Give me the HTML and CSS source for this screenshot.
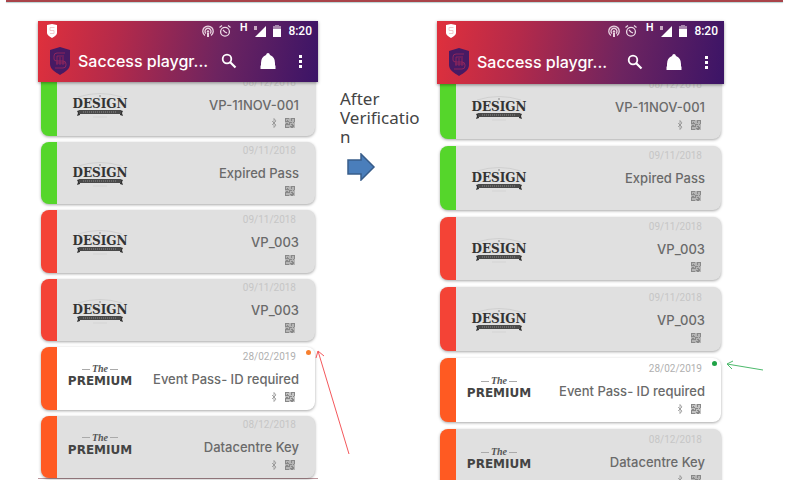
FILE: index.html
```html
<!DOCTYPE html>
<html lang="en">
<head>
  <meta charset="UTF-8" />
  <meta name="viewport" content="width=device-width, initial-scale=1" />
  <title>Pass verification</title>
  <link rel="stylesheet" href="styles.css">
</head>
<body>

  <!-- Shared icons -->
  <svg width="0" height="0" class="defs" aria-hidden="true">
    <symbol id="shield" viewBox="0 0 20 28">
      <path d="M10 0 20 3v14c0 5-5 8-10 11C5 25 0 22 0 17V3z" fill="#471a63" />
      <path d="M15 6H7Q4 6 4 9v3q0 2 3 2h6q3 0 3 3v1q0 3-3 3H5M7 9h7M7 9v9M10 10v8M13 10v8M6 16h9" fill="none" stroke="#a02a5c" stroke-width=".8" />
    </symbol>
    <symbol id="badge" viewBox="0 0 10 14">
      <path d="M5 0 10 1v8c0 2-2 3-5 5C2 12 0 11 0 9V1z" fill="#fff" />
      <path d="M7.500 3.500H3v3h4v3H3" fill="none" stroke="#f0bcc0" stroke-width=".8" />
    </symbol>
    <symbol id="hotspot" viewBox="0 0 12 12">
      <path d="M3 10.500a5.200 5.200 0 1 1 6 0M4 8.500a3 3 0 1 1 4 0" fill="none" stroke="#e8d3e0" stroke-width="1.300" />
      <circle cx="6" cy="6.500" r="1.200" fill="#e8d3e0" /><path d="M5 8h2v4H5z" fill="#e8d3e0" />
    </symbol>
    <symbol id="alarm" viewBox="0 0 12 12">
      <circle cx="6" cy="6.700" r="4.400" fill="none" stroke="#ecdce6" stroke-width="1.300" />
      <path d="M.5 2.500 3 .5M11.500 2.500 9 .5M4 5l2 2 2 1" fill="none" stroke="#ecdce6" stroke-width="1.200" />
    </symbol>
    <symbol id="signal" viewBox="0 0 12 12">
      <path d="M12 1v11H1z" fill="#fff" /><path d="M0 1h3v4H0z" fill="#c9a9c2" />
    </symbol>
    <symbol id="battery" viewBox="0 0 8 12">
      <path d="M2 0h4v1h2v3H0V1h2z" fill="#a888ae" /><path d="M0 4h8v8H0z" fill="#fff" />
    </symbol>
    <symbol id="search" viewBox="0 0 16 16">
      <circle cx="6" cy="6" r="4.300" fill="none" stroke="#fff" stroke-width="1.800" />
      <path d="m9 9 5.500 5.500" stroke="#fff" stroke-width="2.200" />
    </symbol>
    <symbol id="bell" viewBox="0 0 16 16">
      <path d="M8 0q1.500 0 2 2Q15 4 15 10v2.500h.5V16H.5v-3.500H1V10q0-6 5-8Q6.500 0 8 0z" fill="#fff" />
    </symbol>
    <symbol id="dots" viewBox="0 0 4 14">
      <path d="M0 1h3v3H0zM0 6h3v3H0zM0 11h3v3H0z" fill="#fff" />
    </symbol>
    <symbol id="qr" viewBox="0 0 10 10">
      <path d="M0 0h10v10H0z" fill="currentColor" opacity=".5" />
      <path d="M0 0h4v1H1v2h3v1H0zM6 0h4v4H9V1H7v2H6zM0 6h4v1H1v2h3v1H0zM2 2h1v1H2zM4 4h3v1H5v2H4zM6 6h2v1h1v2H8v1H6V8h1V7H6zM8 4h1v1H8zM1 5h2v1H1zM5 8h1v1H5z" fill="currentColor" />
    </symbol>
    <symbol id="bt" viewBox="0 0 6 10">
      <path d="m1 3 4 4-2 2.500v-9L5 3 1 7" fill="none" stroke="currentColor" stroke-width=".7" />
    </symbol>
    <symbol id="arch" viewBox="0 0 64 6">
      <path d="M10 5Q32-2 54 5" fill="none" stroke="#c8c8c8" stroke-width=".7" />
      <path d="M32 3v2" stroke="#888" />
    </symbol>
    <symbol id="ribbon" viewBox="0 0 64 8">
      <path d="m9 1 3-1v5l-3 1 1-3zM55 1l-3-1v5l3 1-1-3z" fill="#333" />
      <path d="M11 0h42v4H11z" fill="#4a4a4a" />
      <path d="M15 2h34" stroke="#8a8a8a" stroke-dasharray="1 1" />
      <path d="M25 7h14" stroke="#ccc" stroke-width=".6" />
    </symbol>
  </svg>

  <main class="stage">
    <section class="phone">
      <header class="top">
        <div class="status">
          <svg class="badge"><use href="#badge" /></svg>
          <svg class="hotspot"><use href="#hotspot" /></svg>
          <svg class="alarm"><use href="#alarm" /></svg>
          <b class="net">H</b>
          <svg class="signal"><use href="#signal" /></svg>
          <svg class="battery"><use href="#battery" /></svg>
          <span class="time">8:20</span>
        </div>
        <div class="appbar">
          <svg class="shield"><use href="#shield" /></svg>
          <h1>Saccess playgr...</h1>
          <button aria-label="Search"><svg class="i-search"><use href="#search" /></svg></button>
          <button aria-label="Notifications"><svg class="i-bell"><use href="#bell" /></svg></button>
          <button aria-label="More"><svg class="i-dots"><use href="#dots" /></svg></button>
        </div>
      </header>
      <div class="passes">
        <article class="pass green">
          <div class="logo design"><svg class="arch"><use href="#arch" /></svg><b>DESIGN</b><svg class="ribbon"><use href="#ribbon" /></svg></div>
          <div class="info"><time>08/12/2018</time><h2>VP-11NOV-001</h2>
            <div class="tags"><svg class="bt"><use href="#bt" /></svg><svg class="qr"><use href="#qr" /></svg></div></div>
        </article>
        <article class="pass green">
          <div class="logo design"><svg class="arch"><use href="#arch" /></svg><b>DESIGN</b><svg class="ribbon"><use href="#ribbon" /></svg></div>
          <div class="info"><time>09/11/2018</time><h2>Expired Pass</h2>
            <div class="tags"><svg class="qr"><use href="#qr" /></svg></div></div>
        </article>
        <article class="pass red">
          <div class="logo design"><svg class="arch"><use href="#arch" /></svg><b>DESIGN</b><svg class="ribbon"><use href="#ribbon" /></svg></div>
          <div class="info"><time>09/11/2018</time><h2>VP_003</h2>
            <div class="tags"><svg class="qr"><use href="#qr" /></svg></div></div>
        </article>
        <article class="pass red">
          <div class="logo design"><svg class="arch"><use href="#arch" /></svg><b>DESIGN</b><svg class="ribbon"><use href="#ribbon" /></svg></div>
          <div class="info"><time>09/11/2018</time><h2>VP_003</h2>
            <div class="tags"><svg class="qr"><use href="#qr" /></svg></div></div>
        </article>
        <article class="pass orange active">
          <div class="logo premium"><i>The</i><b>PREMIUM</b></div>
          <div class="info"><time>28/02/2019</time><h2>Event Pass- ID required</h2>
            <div class="tags"><svg class="bt"><use href="#bt" /></svg><svg class="qr"><use href="#qr" /></svg></div></div>
          <span class="dot pending"></span>
          <svg class="pointer pointer-red" viewBox="0 0 36 108"><path d="M34 106 3 3M1 10 3 3l6 5" fill="none" stroke="#f4585c" /></svg>
        </article>
        <article class="pass orange">
          <div class="logo premium"><i>The</i><b>PREMIUM</b></div>
          <div class="info"><time>08/12/2018</time><h2>Datacentre Key</h2>
            <div class="tags"><svg class="bt"><use href="#bt" /></svg><svg class="qr"><use href="#qr" /></svg></div></div>
        </article>
      </div>
    </section>

    <div class="step">
      <p>After Verification</p>
      <svg class="arrow" viewBox="0 0 29 28"><path d="M1 7h13V1l13 13-13 13v-6H1z" fill="#4a7ebb" stroke="#385d8a" stroke-width="1.500" /></svg>
    </div>

    <section class="phone after">
      <header class="top">
        <div class="status">
          <svg class="badge"><use href="#badge" /></svg>
          <svg class="hotspot"><use href="#hotspot" /></svg>
          <svg class="alarm"><use href="#alarm" /></svg>
          <b class="net">H</b>
          <svg class="signal"><use href="#signal" /></svg>
          <svg class="battery"><use href="#battery" /></svg>
          <span class="time">8:20</span>
        </div>
        <div class="appbar">
          <svg class="shield"><use href="#shield" /></svg>
          <h1>Saccess playgr...</h1>
          <button aria-label="Search"><svg class="i-search"><use href="#search" /></svg></button>
          <button aria-label="Notifications"><svg class="i-bell"><use href="#bell" /></svg></button>
          <button aria-label="More"><svg class="i-dots"><use href="#dots" /></svg></button>
        </div>
      </header>
      <div class="passes">
        <article class="pass green">
          <div class="logo design"><svg class="arch"><use href="#arch" /></svg><b>DESIGN</b><svg class="ribbon"><use href="#ribbon" /></svg></div>
          <div class="info"><time>08/12/2018</time><h2>VP-11NOV-001</h2>
            <div class="tags"><svg class="bt"><use href="#bt" /></svg><svg class="qr"><use href="#qr" /></svg></div></div>
        </article>
        <article class="pass green">
          <div class="logo design"><svg class="arch"><use href="#arch" /></svg><b>DESIGN</b><svg class="ribbon"><use href="#ribbon" /></svg></div>
          <div class="info"><time>09/11/2018</time><h2>Expired Pass</h2>
            <div class="tags"><svg class="qr"><use href="#qr" /></svg></div></div>
        </article>
        <article class="pass red">
          <div class="logo design"><svg class="arch"><use href="#arch" /></svg><b>DESIGN</b><svg class="ribbon"><use href="#ribbon" /></svg></div>
          <div class="info"><time>09/11/2018</time><h2>VP_003</h2>
            <div class="tags"><svg class="qr"><use href="#qr" /></svg></div></div>
        </article>
        <article class="pass red">
          <div class="logo design"><svg class="arch"><use href="#arch" /></svg><b>DESIGN</b><svg class="ribbon"><use href="#ribbon" /></svg></div>
          <div class="info"><time>09/11/2018</time><h2>VP_003</h2>
            <div class="tags"><svg class="qr"><use href="#qr" /></svg></div></div>
        </article>
        <article class="pass orange active">
          <div class="logo premium"><i>The</i><b>PREMIUM</b></div>
          <div class="info"><time>28/02/2019</time><h2>Event Pass- ID required</h2>
            <div class="tags"><svg class="bt"><use href="#bt" /></svg><svg class="qr"><use href="#qr" /></svg></div></div>
          <span class="dot verified"></span>
          <svg class="pointer pointer-green" viewBox="0 0 40 14"><path d="M38 11 2 5M8 2 2 5l5 5" fill="none" stroke="#4dba6c" /></svg>
        </article>
        <article class="pass orange">
          <div class="logo premium"><i>The</i><b>PREMIUM</b></div>
          <div class="info"><time>08/12/2018</time><h2>Datacentre Key</h2>
            <div class="tags"><svg class="bt"><use href="#bt" /></svg><svg class="qr"><use href="#qr" /></svg></div></div>
        </article>
      </div>
    </section>
  </main>

</body>
</html>
```
FILE: styles.css
```css
:root {
  --green: #55d62b;
  --red: #f44336;
  --orange: #ff5a22;
  --expired: #e0e0e0;
  --text: #6a6a6a;
  --muted: #c6c6c6;
}
* {
  box-sizing: border-box;
}
body {
  margin: 0;
  height: 100vh;
  overflow: hidden;
  background: #fff;
  font-family: Inter, sans-serif;
}
svg {
  display: block;
  flex: none;
}
.defs {
  position: absolute;
}
body::before {
  content: "";
  display: block;
  height: 2px;
  margin: 0 17px 0 6px;
  background: #a9444a;
  box-shadow: 0 1px 1px #b9d4d4;
}
.stage {
  display: grid;
  grid-template-columns: 280fr 119fr 287fr;
  align-items: start;
  padding: 19px 76px 0 38px;
}
.phone {
  border-bottom: 1px solid #b9969c;
}

/* header */
.top {
  position: relative;
  z-index: 1;
  height: 61px;
  background: linear-gradient(100deg, #e0303c 0%, #b52a4a 28%, #6d2460 65%, #3b1467 100%);
  box-shadow: 0 1px 3px rgba(0,0,0,0.4);
  color: #fff;
}
.after .top {
  height: 63px;
}
.status {
  display: flex;
  align-items: center;
  height: 19px;
  padding: 0 6px 0 9px;
}
.badge {
  width: 10px;
  height: 14px;
  margin-right: auto;
}
.hotspot, .alarm {
  width: 12px;
  height: 12px;
  margin-right: 5px;
}
.net {
  align-self: flex-start;
  margin: 0 7px 0 4px;
  font-size: 10px;
  line-height: 13px;
}
.signal {
  width: 12px;
  height: 12px;
}
.battery {
  width: 8px;
  height: 12px;
  margin: 0 7px;
}
.time {
  font-family: Roboto, sans-serif;
  font-size: 12px;
  font-weight: 500;
}
.appbar {
  display: flex;
  align-items: center;
  height: 42px;
  padding: 0 15px 0 12px;
}
.after .appbar {
  height: 44px;
}
.shield {
  width: 20px;
  height: 28px;
}
h1 {
  flex: 1;
  margin: 0 0 0 8px;
  font-size: 16px;
  font-weight: 500;
  line-height: 20px;
  white-space: nowrap;
}
button {
  padding: 0;
  border: none;
  background: none;
  cursor: pointer;
}
.i-search, .i-bell {
  width: 16px;
  height: 16px;
  margin-right: 23px;
}
.i-dots {
  width: 4px;
  height: 14px;
}

/* pass list */
.passes {
  display: flex;
  flex-direction: column;
  gap: 6px;
  min-height: 405px;
  margin-top: -9px;
  padding: 0 3px;
}
.after .passes {
  gap: 7px;
  min-height: 418px;
}
.pass {
  position: relative;
  flex: 1;
  display: flex;
  align-items: center;
  padding: 0 16px 4px 0;
  border-left: 16px solid var(--green);
  border-radius: 8px;
  background: var(--expired);
  box-shadow: 0 1px 3px rgba(0,0,0,0.35);
}
.red {
  border-left-color: var(--red);
}
.orange {
  border-left-color: var(--orange);
}
.active {
  background: #fff;
}
.logo {
  display: flex;
  flex-direction: column;
  align-items: center;
  width: 64px;
  margin-left: 11px;
}
.design {
  padding-top: 6px;
}
.arch {
  width: 64px;
  height: 6px;
}
.ribbon {
  width: 64px;
  height: 8px;
}
.design b {
  font-family: "DejaVu Serif", serif;
  font-size: 12px;
  line-height: 12px;
  color: #333;
}
.premium i {
  display: flex;
  align-items: center;
  gap: 2px;
  font-family: "Liberation Serif", serif;
  font-size: 10px;
  font-weight: bold;
  line-height: 10px;
  color: #555;
}
.premium i::before, .premium i::after {
  content: "";
  width: 8px;
  height: 1px;
  background: #aaa;
}
.premium b {
  font-family: "DejaVu Sans", sans-serif;
  font-size: 12px;
  line-height: 14px;
  color: #444;
}
.info {
  flex: 1;
  display: flex;
  flex-direction: column;
  align-items: flex-end;
}
time {
  margin-right: 3px;
  font-family: Roboto, sans-serif;
  font-size: 10px;
  line-height: 12px;
  color: var(--muted);
}
.active time {
  color: #b0b0b0;
}
h2 {
  margin: 7px 0 4px;
  font-size: 13px;
  font-weight: 500;
  line-height: 18px;
  color: var(--text);
  white-space: nowrap;
}
.tags {
  display: flex;
  gap: 8px;
  margin-right: 4px;
  color: #888;
}
.qr {
  width: 10px;
  height: 10px;
}
.bt {
  width: 6px;
  height: 10px;
}
.dot {
  position: absolute;
  top: 3px;
  right: 4px;
  width: 5px;
  height: 5px;
  border-radius: 50%;
}
.pending {
  background: #f77f2e;
}
.verified {
  background: #1fa346;
}
.pointer {
  position: absolute;
  left: 100%;
  top: 1px;
}
.pointer-red {
  width: 36px;
  height: 108px;
}
.pointer-green {
  width: 40px;
  height: 14px;
  margin-left: 4px;
}

/* middle step */
.step {
  padding: 68px 14px 0 22px;
}
.step p {
  margin: 0 0 7px;
  font-family: "Noto Sans", sans-serif;
  font-size: 17px;
  line-height: 19px;
  color: #444;
  overflow-wrap: anywhere;
}
.arrow {
  width: 29px;
  height: 28px;
  margin-left: 7px;
}
```
